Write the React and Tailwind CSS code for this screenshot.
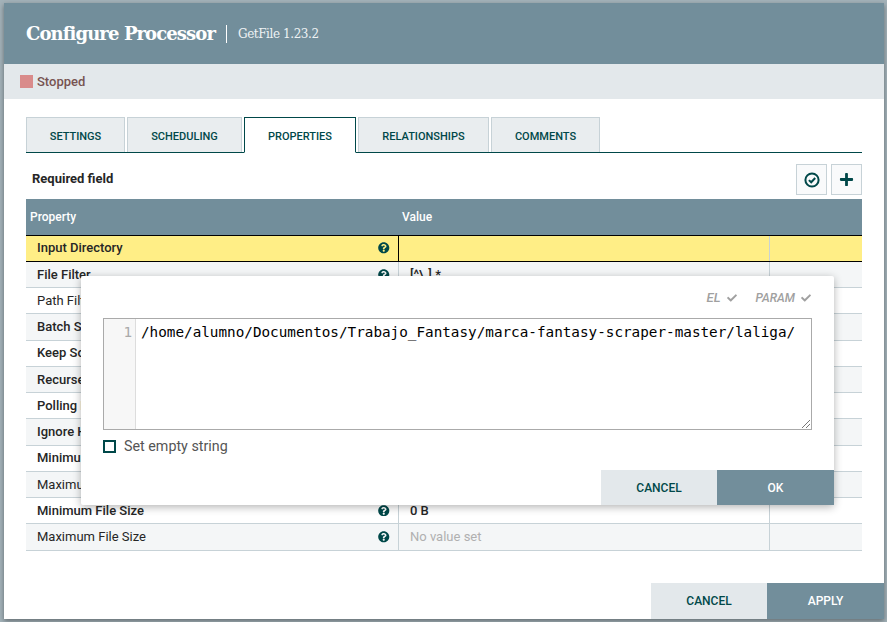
import React from "react";
import { FaQuestionCircle, FaPlus, FaCheck } from "react-icons/fa";

const rows = [
  { n: "Input Directory", b: true, v: "", y: true },
  { n: "File Filter", b: true, v: "[^\\.].*", vb: true, g: true },
  { n: "Path Filter", b: false, v: "", g: false },
  { n: "Batch Size", b: true, v: "", g: true },
  { n: "Keep Source File", b: true, v: "", g: false },
  { n: "Recurse Subdirectories", b: true, v: "", g: true },
  { n: "Polling Interval", b: true, v: "", g: false },
  { n: "Ignore Hidden Files", b: true, v: "", g: true },
  { n: "Minimum File Age", b: true, v: "", g: false },
  { n: "Maximum File Age", b: false, v: "", g: true },
  { n: "Minimum File Size", b: true, v: "0 B", vb: true, g: false },
  { n: "Maximum File Size", b: false, v: "No value set", ph: true, g: true },
];

const tabs = [
  { t: "SETTINGS", w: "w-[99px]" },
  { t: "SCHEDULING", w: "w-[115px]" },
  { t: "PROPERTIES", w: "w-[112px]", active: true },
  { t: "RELATIONSHIPS", w: "w-[131px]" },
  { t: "COMMENTS", w: "w-[109px]" },
];

function Row({ r }) {
  const bg = r.y ? "bg-[#ffee86] border-b-black" : r.g ? "bg-[#f4f6f7] border-b-[#c7d2d7]" : "bg-white border-b-[#c7d2d7]";
  return (
    <div className={`flex h-[26.25px] border-b overflow-hidden ${bg}`}>
      <div className={`w-[372px] shrink-0 flex items-center pl-[11px] pr-[8.5px] text-[13px] text-[#262626] ${r.b ? "font-medium" : ""}`}>
        <span className="flex-1 whitespace-nowrap">{r.n}</span>
        <FaQuestionCircle className="text-[#004849] w-[11.5px] h-[11.5px]" />
      </div>
      <div className={`w-[371px] shrink-0 flex items-center pl-[11px] text-[13px] border-l ${r.y ? "border-l-black" : "border-l-[#c7d2d7]"} ${r.ph ? "text-[#b0b0b0]" : "text-[#262626]"} ${r.vb ? "font-medium" : ""}`}>
        {r.v}
      </div>
      <div className="flex-1 border-l border-l-[#c7d2d7]" />
    </div>
  );
}

export default function App() {
  return (
    <div className="relative w-[887px] h-[622px] overflow-hidden bg-[#a3b2b9] pt-[3px] pl-[4px] font-['Roboto',sans-serif]">
      <div className="w-[880px] h-[616px] bg-white flex flex-col shadow-[0_2px_5px_rgba(0,0,0,0.4)]">
        <div className="h-[61px] shrink-0 bg-[#728e9b] flex items-center pl-[22px] pt-[1px] text-white">
          <span className="font-['DejaVu_Serif',serif] font-bold text-[18px] tracking-[-0.9px] leading-none">Configure Processor</span>
          <span className="ml-[11px] mr-[11px] h-[18px] w-px bg-white" />
          <span className="font-['DejaVu_Serif',serif] text-[12px] tracking-[-0.42px] leading-none text-[#eef2f4]">GetFile 1.23.2</span>
        </div>
        <div className="h-[35px] shrink-0 bg-[#e3e8eb] flex items-center pl-[16px]">
          <span className="w-[13px] h-[13px] bg-[#d98b8b]" />
          <span className="ml-[4px] text-[13px] font-medium text-[#775351]">Stopped</span>
        </div>
        <div className="pl-[22px] pr-[22px] pt-[18px] flex-1 flex flex-col">
          <div className="flex h-[36px] gap-[2px] border-b border-b-[#004849] w-[836px]">
            {tabs.map((t) => (
              <div
                key={t.t}
                className={`${t.w} flex items-center justify-center pt-[4px] text-[11px] font-medium text-[#004849] ${
                  t.active
                    ? "bg-white border border-[#004849] border-b-white h-[36px]"
                    : "bg-[#e9edef] border border-[#c7d2d7] border-b-0 h-[35px]"
                }`}
              >
                {t.t}
              </div>
            ))}
          </div>
          <div className="flex items-start h-[46px] w-[836px]">
            <span className="pl-[6px] pt-[17px] flex-1 text-[13px] leading-[18px] font-bold text-[#262626]">Required field</span>
            <div className="flex gap-[4px] pt-[11px]">
              <div className="w-[31px] h-[31px] bg-[#f9fafb] border border-[#c7d2d7] flex items-center justify-center">
                <svg className="w-[16px] h-[16px]" viewBox="0 0 16 16" fill="none" stroke="#004849">
                  <circle cx="8" cy="8" r="6.6" strokeWidth="2" />
                  <path d="M4.9 8.1 L7.2 10.3 L11.2 6" strokeWidth="2" />
                </svg>
              </div>
              <div className="w-[31px] h-[31px] bg-[#f9fafb] border border-[#c7d2d7] flex items-center justify-center">
                <FaPlus className="w-[15px] h-[15px] text-[#004849]" />
              </div>
            </div>
          </div>
          <div className="w-[836px]">
            <div className="flex h-[36.6px] bg-[#728e9b] border-b border-b-black text-white text-[12px] font-medium items-center">
              <span className="w-[372px] pl-[4px]">Property</span>
              <span className="pl-[4px]">Value</span>
            </div>
            {rows.map((r) => (
              <Row key={r.n} r={r} />
            ))}
          </div>
          <div className="flex justify-end mt-auto w-[858px]">
            <div className="w-[116px] h-[36px] bg-[#e3e8eb] flex items-center justify-center text-[12px] font-medium text-[#004849]">CANCEL</div>
            <div className="w-[117px] h-[36px] bg-[#728e9b] flex items-center justify-center text-[12px] font-medium text-white">APPLY</div>
          </div>
        </div>
      </div>

      <div className="absolute left-[81px] top-[276px] w-[753px] h-[229px] bg-white rounded-[2px] shadow-[0_2px_8px_rgba(0,0,0,0.3)] flex flex-col">
        <div className="h-[42px] shrink-0 flex items-center justify-end pr-[23px] pt-[2px] text-[12px] italic font-medium text-[#a0a0a0]">
          <span className="text-[13px]">EL</span>
          <FaCheck className="ml-[6px] w-[10px] h-[10px]" />
          <span className="ml-[19px]">PARAM</span>
          <FaCheck className="ml-[6px] w-[10px] h-[10px]" />
        </div>
        <div className="relative ml-[22px] w-[709px] h-[112px] shrink-0 border border-[#aaaaaa] flex font-['DejaVu_Sans_Mono',monospace] text-[14.3px] leading-[26px]">
          <div className="w-[32px] shrink-0 bg-[#f7f7f7] border-r border-r-[#dddddd] text-right pr-[3px] text-[#aaaaaa]">1</div>
          <div className="pl-[5px] text-black whitespace-nowrap">/home/alumno/Documentos/Trabajo_Fantasy/marca-fantasy-scraper-master/laliga/</div>
          <svg className="absolute right-[0px] bottom-[0px] w-[11px] h-[11px]" viewBox="0 0 11 11">
            <path d="M2 10 L10 2 M6 10 L10 6" stroke="#777" strokeWidth="1" fill="none" />
          </svg>
        </div>
        <div className="flex items-center ml-[22px] mt-[9px] h-[14px]">
          <span className="w-[13px] h-[13px] border-2 border-[#004849] bg-white" />
          <span className="ml-[8px] pt-[2px] text-[14.3px] text-[#555555]">Set empty string</span>
        </div>
        <div className="flex justify-end mt-auto">
          <div className="w-[116px] h-[35px] bg-[#e3e8eb] flex items-center justify-center text-[12px] font-medium text-[#004849]">CANCEL</div>
          <div className="w-[117px] h-[35px] bg-[#728e9b] flex items-center justify-center text-[12px] font-medium text-white">OK</div>
        </div>
      </div>
    </div>
  );
}
